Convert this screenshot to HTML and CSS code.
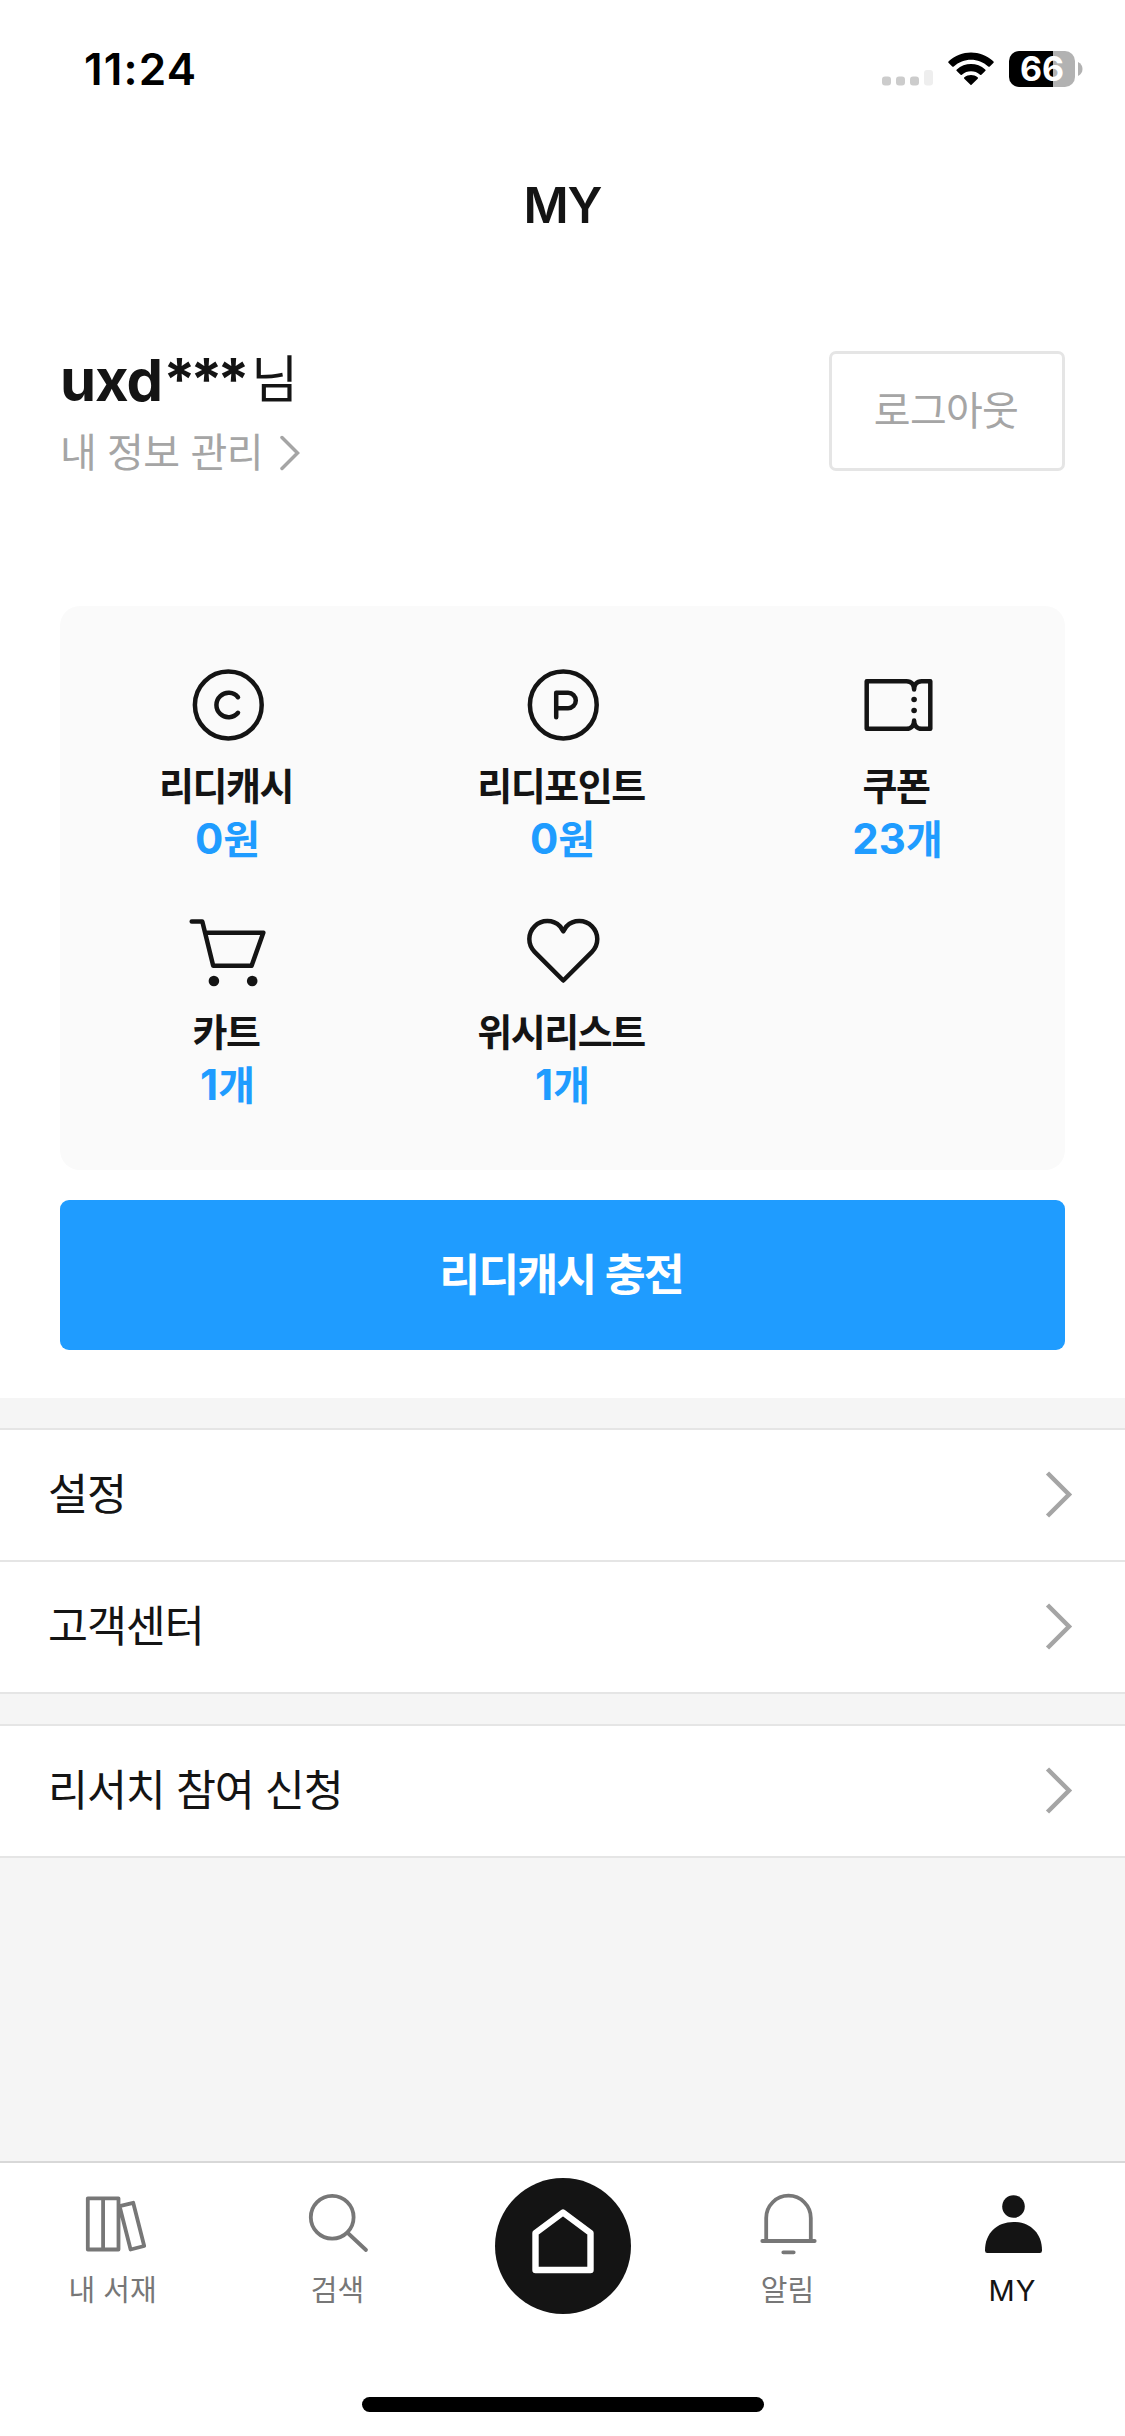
FILE: index.html
```html
<!DOCTYPE html>
<html lang="ko">
<head>
<meta charset="utf-8">
<title>MY</title>
<link rel="stylesheet" href="styles.css">
</head>
<body>
<div class="status">
  <span class="time">11:24</span>
  <div class="status-icons">
    <svg class="signal" width="52" height="16" viewBox="0 0 52 16">
      <g fill="#cccccc"><rect x="0" y="6.500" width="9" height="9" rx="3"/><rect x="14" y="6.500" width="9" height="9" rx="3"/><rect x="28" y="6.500" width="9" height="9" rx="3"/></g>
      <rect x="42" y="0" width="9" height="15.500" rx="3" fill="#eeeeee"/>
    </svg>
    <svg class="wifi" width="46" height="34" viewBox="0 0 46 34">
      <path d="M23 33.300L16.300 26.700a1 1 0 0 1 .1-1.500c3.800-3.100 9.400-3.100 13.200 0a1 1 0 0 1 .1 1.500zM8.800 19.100a1.200 1.200 0 0 1 0-1.700c8-7.300 20.400-7.300 28.400 0a1.200 1.200 0 0 1 0 1.700l-3.500 3.500a1.200 1.200 0 0 1-1.600.1c-5.200-4.500-13-4.500-18.200 0a1.200 1.200 0 0 1-1.600-.1zM.7 11a1.200 1.200 0 0 1 0-1.700C13.100-2.600 32.900-2.600 45.300 9.300a1.200 1.200 0 0 1 0 1.700l-3.500 3.500a1.200 1.200 0 0 1-1.600 0c-9.600-9-24.800-9-34.400 0a1.200 1.200 0 0 1-1.600 0z"/>
    </svg>
    <div class="battery">66</div>
    <svg class="battery-cap" width="5" height="14" viewBox="0 0 5 14"><path d="M0 0c6 2.500 6 11.500 0 14z" fill="#b2b2b2"/></svg>
  </div>
</div>
<header class="title">MY</header>

<section class="profile">
  <div class="who">
    <div class="name"><b>uxd</b><b class="mask">***</b><span class="nim">님</span></div>
    <a class="manage"><span>내 정보 관리</span>
      <svg width="20" height="36" viewBox="0 0 20 36" fill="none" stroke="#a5a5a5" stroke-width="3.500" stroke-linecap="round"><path d="M2 2.500L17.500 18 2 33.500"/></svg></a>
  </div>
  <button class="logout">로그아웃</button>
</section>

<section class="card">
  <div class="item">
    <svg class="icon" viewBox="0 0 90 90"><circle cx="45.300" cy="45" r="33.400"/><path d="M55 37.200a12.200 12.200 0 1 0 0 15.600"/></svg>
    <span class="label">리디캐시</span><span class="value"><i>0</i>원</span>
  </div>
  <div class="item">
    <svg class="icon" viewBox="0 0 90 90"><circle cx="45.300" cy="45" r="33.400"/><path d="M38.200 57.200V32.800h11.900a7.700 7.700 0 0 1 0 15.400H38.200"/></svg>
    <span class="label">리디포인트</span><span class="value"><i>0</i>원</span>
  </div>
  <div class="item">
    <svg class="icon" viewBox="0 0 90 90"><path d="M13.700 21.200H53.500c5 0 7.600 3.500 7.600 8.300c0-4.800 2.600-8.300 7.600-8.300H77.300V68.800H68.700c-5 0-7.600-3.500-7.600-8.300c0 4.800-2.600 8.300-7.600 8.300H13.700z"/><g class="solid"><circle cx="61.100" cy="39.500" r="2.800"/><circle cx="61.100" cy="50.500" r="2.800"/></g></svg>
    <span class="label">쿠폰</span><span class="value"><i>23</i>개</span>
  </div>
  <div class="item">
    <svg class="icon" viewBox="0 0 90 90"><path d="M8.700 15.500H19.300L30.200 59.700H68.600L80.300 26.700H22.300"/><g class="solid"><circle cx="30.900" cy="75" r="5.300"/><circle cx="69.200" cy="75" r="5.300"/></g></svg>
    <span class="label">카트</span><span class="value"><i>1</i>개</span>
  </div>
  <div class="item">
    <svg class="icon" viewBox="0 0 90 90"><path d="M45.300 74.500L16.600 45.800a18 18 0 0 1 25.500-25.500l3.200 5 3.200-5A18 18 0 0 1 74 45.800z"/></svg>
    <span class="label">위시리스트</span><span class="value"><i>1</i>개</span>
  </div>
</section>
<button class="charge">리디캐시 충전</button>

<main class="menu">
  <div class="group">
    <a class="row"><span>설정</span><svg class="chev" viewBox="0 0 28 50"><path d="M2.500 3L24 24.500 2.500 46"/></svg></a>
    <a class="row"><span>고객센터</span><svg class="chev" viewBox="0 0 28 50"><path d="M2.500 3L24 24.500 2.500 46"/></svg></a>
  </div>
  <div class="group">
    <a class="row"><span>리서치 참여 신청</span><svg class="chev" viewBox="0 0 28 50"><path d="M2.500 3L24 24.500 2.500 46"/></svg></a>
  </div>
</main>

<nav class="tabs">
  <a class="tab"><svg class="tab-icon" viewBox="0 0 90 90"><path d="M19.800 18.300H50.500V69.500H19.800zM35.100 18.300V69.500M51.600 26.200L65.200 22.800 76.200 66 62.600 69.500z"/></svg>내 서재</a>
  <a class="tab"><svg class="tab-icon" viewBox="0 0 90 90"><circle cx="39.200" cy="37.300" r="21.400"/><path d="M54.800 53L73 70"/></svg>검색</a>
  <a class="tab home"><svg width="136" height="136" viewBox="0 0 136 136"><circle cx="68" cy="68" r="68" fill="#141414"/><path d="M68 34.500L95.500 55V92H40.500V55z" fill="none" stroke="#fff" stroke-width="6.400" stroke-linejoin="round"/></svg></a>
  <a class="tab"><svg class="tab-icon" viewBox="0 0 90 90"><path d="M23.200 61V38a22.300 22.300 0 0 1 44.600 0V61M19.300 61H71.700M40.300 72.300H50.700"/></svg>알림</a>
  <a class="tab active"><svg class="tab-icon" viewBox="0 0 90 90"><circle cx="45.500" cy="26.500" r="11.300"/><path d="M17 70.500C17 53 29 42 45.500 42S74 53 74 70.500Q74 73 71.800 73H19.200Q17 73 17 70.500z"/></svg>MY</a>
</nav>
<div class="indicator"></div>
</body>
</html>
```
FILE: styles.css
```css
* { box-sizing: border-box; }
body {
  margin: 0;
  width: 1125px;
  height: 2436px;
  display: flex;
  flex-direction: column;
  background: #fff;
  color: #141414;
  font-family: Inter, "Noto Sans CJK KR", sans-serif;
}
button { font-family: inherit; padding: 0; margin: 0; }
svg { display: block; flex: none; }

/* Status bar */
.status {
  height: 150px;
  padding: 39px 43px 0 84px;
  display: flex;
  justify-content: space-between;
  align-items: flex-start;
  color: #000;
}
.time { font-size: 44px; line-height: 60px; font-weight: 600; letter-spacing: 1.2px; }
.status-icons { display: flex; align-items: center; height: 60px; }
.signal { margin: 17px 14px 0 0; }
.wifi { margin-right: 15px; }
.battery {
  width: 66px;
  height: 36px;
  border-radius: 10px;
  background: linear-gradient(90deg, #000 44px, #b2b2b2 44px);
  color: #fff;
  font-size: 34px;
  line-height: 36px;
  font-weight: 700;
  text-align: center;
}
.battery-cap { margin: 0 -1px 0 3px; }

.title {
  height: 110px;
  line-height: 111px;
  font-size: 49px;
  font-weight: 600;
  letter-spacing: -1px;
  text-align: center;
}

/* Profile */
.profile {
  height: 346px;
  padding: 85px 60px 0;
  display: flex;
  justify-content: space-between;
  align-items: flex-start;
}
.name { display: flex; height: 70px; font-size: 58px; line-height: 70px; }
.name b { font-weight: 700; letter-spacing: -1px; }
.name .mask { margin: -1px 0 0 1px; letter-spacing: -5.400px; }
.nim { font-size: 51px; margin-left: 7px; }
.manage {
  display: flex;
  align-items: center;
  margin-top: 13px;
  font-size: 40px;
  line-height: 50px;
  letter-spacing: -0.500px;
  color: #a5a5a5;
}
.manage svg { margin-left: 17px; }
.logout {
  width: 236px;
  height: 120px;
  margin-top: 6px;
  padding-right: 2px;
  border: 3px solid #e5e5e5;
  border-radius: 7px;
  background: #fff;
  color: #a5a5a5;
  font-size: 40px;
  line-height: 60px;
  letter-spacing: -0.700px;
}

/* Wallet summary */
.card {
  height: 564px;
  margin: 0 60px;
  padding-top: 54px;
  display: grid;
  grid-template-columns: repeat(3, 1fr);
  grid-auto-rows: 246px;
  border-radius: 20px;
  background: #fafafa;
}
.item { display: flex; flex-direction: column; align-items: center; }
.icon {
  width: 90px;
  height: 90px;
  fill: none;
  stroke: #141414;
  stroke-width: 4.5;
  stroke-linecap: round;
  stroke-linejoin: round;
}
.solid { fill: #141414; stroke: none; }
.label {
  margin-top: 13px;
  padding-right: 3px;
  font-size: 38px;
  line-height: 46px;
  font-weight: 600;
  letter-spacing: -1.500px;
}
.value {
  margin-top: 4px;
  font-size: 40px;
  line-height: 52px;
  font-weight: 700;
  color: #1f9cff;
}
.value i { font-style: normal; font-size: 42px; }

.charge {
  height: 150px;
  flex: none;
  margin: 30px 60px 48px;
  padding-right: 3px;
  border: 0;
  border-radius: 9px;
  background: #1f9cff;
  color: #fff;
  font-size: 44.500px;
  line-height: 60px;
  font-weight: 600;
  letter-spacing: -1.900px;
}

/* Menu */
.menu {
  height: 763px;
  flex: none;
  padding-top: 30px;
  display: flex;
  flex-direction: column;
  gap: 30px;
  background: #f5f5f5;
}
.group { border-top: 2px solid #e5e5e5; }
.row {
  height: 132px;
  padding: 0 52px 0 48px;
  display: flex;
  align-items: center;
  justify-content: space-between;
  border-bottom: 2px solid #e5e5e5;
  background: #fff;
  font-size: 43.500px;
  line-height: 60px;
  letter-spacing: -1.100px;
}
.row span { padding-bottom: 2px; }
.chev { width: 28px; height: 50px; fill: none; stroke: #a5a5a5; stroke-width: 4.5; }

/* Tab bar */
.tabs {
  height: 236px;
  flex: none;
  display: grid;
  grid-template-columns: repeat(5, 1fr);
  border-top: 2px solid #d8d8d8;
}
.tab {
  padding-top: 17px;
  display: flex;
  flex-direction: column;
  align-items: center;
  color: #777;
  font-size: 29px;
  line-height: 41px;
}
.home { padding-top: 15px; }
.tab-icon {
  width: 90px;
  height: 90px;
  fill: none;
  stroke: #777;
  stroke-width: 3.8;
  stroke-linecap: round;
  stroke-linejoin: round;
}
.active { color: #141414; letter-spacing: 1px; }
.active .tab-icon { fill: #141414; stroke: none; }
.indicator {
  width: 402px;
  height: 15px;
  margin: 0 auto;
  border-radius: 8px;
  background: #000;
}
```
